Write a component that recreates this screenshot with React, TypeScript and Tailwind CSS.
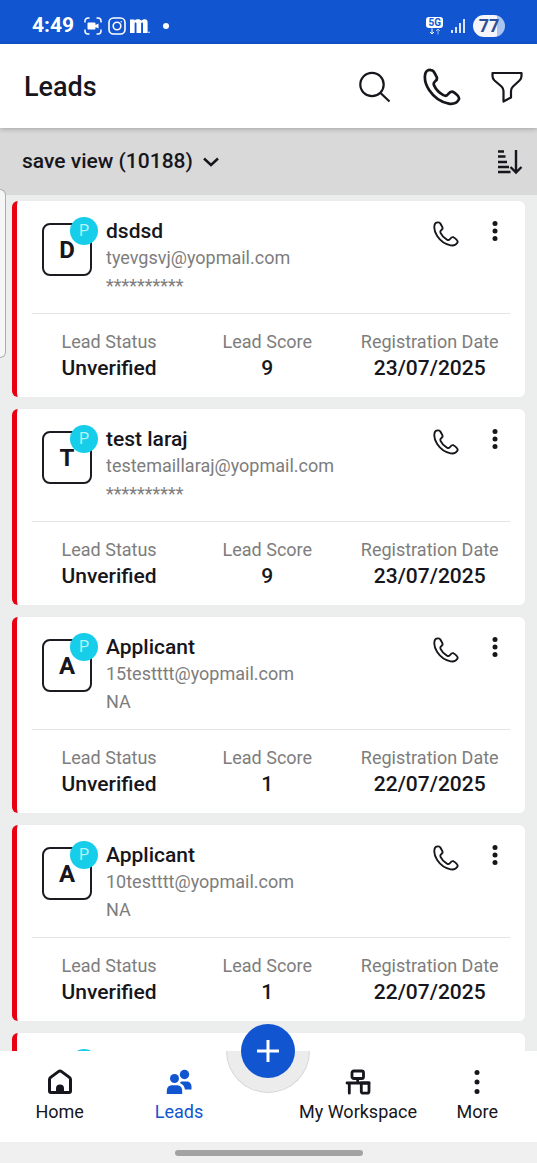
import React from 'react';

interface Lead {
  id: number;
  name: string;
  email: string;
  phone: string;
  status: string;
  score: number;
  registered: string;
}

interface IconProps {
  className?: string;
}

const leads: Lead[] = [
  { id: 1, name: 'dsdsd', email: 'tyevgsvj@yopmail.com', phone: '**********', status: 'Unverified', score: 9, registered: '23/07/2025' },
  { id: 2, name: 'test laraj', email: 'testemaillaraj@yopmail.com', phone: '**********', status: 'Unverified', score: 9, registered: '23/07/2025' },
  { id: 3, name: 'Applicant', email: '15testttt@yopmail.com', phone: 'NA', status: 'Unverified', score: 1, registered: '22/07/2025' },
  { id: 4, name: 'Applicant', email: '10testttt@yopmail.com', phone: 'NA', status: 'Unverified', score: 1, registered: '22/07/2025' },
  { id: 5, name: 'Applicant', email: '10testttt@yopmail.com', phone: 'NA', status: 'Unverified', score: 1, registered: '22/07/2025' },
];

const PhoneIcon: React.FC<IconProps> = ({ className }) => (
  <svg viewBox="-4 -4 112 112" className={className} fill="none" stroke="currentColor" strokeWidth="8" strokeLinejoin="round" aria-hidden="true">
    <path d="M19 2C12 1 5 5 3 12C-1 28 3 44 14 61C28 82 48 97 72 101C85 103 95 100 101 90C104 85 101 80 97 76C92 71 88 68 84 66C78 64 74 68 70 73C67 78 62 79 56 76C45 70 34 59 29 48C26 42 28 38 32 35C38 31 38 25 35 20C32 14 30 10 27 6C25 3 22 2 19 2Z" />
  </svg>
);

const SearchIcon: React.FC<IconProps> = ({ className }) => (
  <svg viewBox="0 0 32 32" className={className} fill="none" stroke="currentColor" strokeWidth="2.200" aria-hidden="true">
    <circle cx="13" cy="13.500" r="11.700" />
    <path d="M21.500 22L30.500 30.500" />
  </svg>
);

const FilterIcon: React.FC<IconProps> = ({ className }) => (
  <svg viewBox="0 0 32 32" className={className} fill="none" stroke="currentColor" strokeWidth="2.200" strokeLinejoin="round" aria-hidden="true">
    <path d="M1.500 2H30.500V5C30.500 7 29.800 8.300 28.500 9.500L22 15.500C20.600 16.800 20 18 20 20V26.500L12.500 30.500V20C12.500 18 11.800 16.800 10.500 15.500L3.500 9.500C2.200 8.300 1.500 7 1.500 5Z" />
  </svg>
);

const SortIcon: React.FC<IconProps> = ({ className }) => (
  <svg viewBox="0 0 26 26" className={className} fill="none" stroke="currentColor" strokeWidth="2.400" aria-hidden="true">
    <path d="M1 2.500H7M1 7.500H8.500M1 13H10M1 18H12M1 23H13.500" />
    <path d="M19 1V23.500M13.500 18L19 23.500L24.500 18" />
  </svg>
);

const KebabIcon: React.FC<IconProps> = ({ className }) => (
  <svg viewBox="0 0 6 20" className={className} fill="currentColor" aria-hidden="true">
    <circle cx="3" cy="2.500" r="2.500" />
    <circle cx="3" cy="10" r="2.500" />
    <circle cx="3" cy="17.500" r="2.500" />
  </svg>
);

const MoreIcon: React.FC<IconProps> = ({ className }) => (
  <svg viewBox="0 0 6 26" className={className} fill="currentColor" aria-hidden="true">
    <circle cx="3" cy="3.500" r="2.500" />
    <circle cx="3" cy="13" r="2.500" />
    <circle cx="3" cy="22.500" r="2.500" />
  </svg>
);

const HomeIcon: React.FC<IconProps> = ({ className }) => (
  <svg viewBox="0 0 26 26" className={className} fill="none" stroke="currentColor" strokeWidth="3" strokeLinejoin="round" aria-hidden="true">
    <path d="M2.500 10.500C2.500 9.500 2.900 9 3.600 8.400L11.400 2.600C12.500 1.800 13.500 1.800 14.600 2.600L22.400 8.400C23.100 9 23.500 9.500 23.500 10.500V22C23.500 23 23 23.500 22 23.500H4C3 23.500 2.500 23 2.500 22Z" />
    <path d="M9 24V19.500A4 4 0 0 1 17 19.500V24Z" fill="currentColor" stroke="none" />
  </svg>
);

const LeadsIcon: React.FC<IconProps> = ({ className }) => (
  <svg viewBox="0 0 26 26" className={className} fill="currentColor" aria-hidden="true">
    <circle cx="18.500" cy="5.500" r="4.700" />
    <path d="M15 12.500H20.500C23.600 12.500 25.500 14.600 25.500 17.500V20.500H19C18.500 17.500 17 15.300 14 14Z" />
    <circle cx="8.500" cy="9.500" r="5.200" fill="#fff" />
    <circle cx="8.500" cy="9.500" r="4.500" />
    <path d="M0.800 25V22C0.800 18.300 2.900 16.200 6.300 16.200H10.700C14.100 16.200 16.200 18.300 16.200 22V25Z" />
  </svg>
);

const WorkspaceIcon: React.FC<IconProps> = ({ className }) => (
  <svg viewBox="0 0 26 26" className={className} fill="none" stroke="currentColor" strokeWidth="2.800" strokeLinecap="round" strokeLinejoin="round" aria-hidden="true">
    <rect x="7" y="2" width="11.500" height="7.500" rx="1.800" />
    <path d="M12.700 9.500V14M2 14H24M4.300 14V24.200" />
    <path d="M16.300 14H24V22.200A2 2 0 0 1 22 24.200H18.300A2 2 0 0 1 16.300 22.200Z" />
  </svg>
);

const StatusBar = () => (
  <div className="flex h-11 shrink-0 items-center justify-between bg-[#1155d0] px-8 pt-2 text-white">
    <div className="flex items-center">
      <span className="text-[21px] font-bold">4:49</span>
      <svg viewBox="0 0 18 18" className="ml-[10px] size-[18px]" fill="none" stroke="currentColor" strokeWidth="1.500" aria-hidden="true">
        <path d="M1 5.500V4A3 3 0 0 1 4 1H5.500M12.500 1H14A3 3 0 0 1 17 4V5.500M17 12.500V14A3 3 0 0 1 14 17H12.500M5.500 17H4A3 3 0 0 1 1 14V12.500" />
        <path d="M4.500 5.500H10.500A1 1 0 0 1 11.500 6.500V8L14.500 6.500V11.500L11.500 10V11.500A1 1 0 0 1 10.500 12.500H4.500A1 1 0 0 1 3.500 11.500V6.500A1 1 0 0 1 4.500 5.500Z" fill="currentColor" stroke="none" />
      </svg>
      <svg viewBox="0 0 18 18" className="ml-[6px] size-[18px]" fill="none" stroke="currentColor" strokeWidth="1.600" aria-hidden="true">
        <rect x="1" y="1" width="16" height="16" rx="4.500" />
        <circle cx="9" cy="9" r="3.800" />
        <circle cx="13.300" cy="4.700" r="0.700" fill="currentColor" stroke="none" />
      </svg>
      <svg viewBox="0 0 20 16" className="ml-1 h-4 w-5" fill="currentColor" aria-hidden="true">
        <path d="M0 1.500H4.500V2.500C5.500 1.600 6.500 1.200 8 1.200C9.600 1.200 10.700 1.700 11.300 2.700C12.300 1.700 13.400 1.200 14.800 1.200C16.700 1.200 17.600 2.300 17.600 4.500V15H13V6C13 5 12.700 4.600 12.100 4.600C11.500 4.600 11.100 5.100 11.100 6V15H6.500V6C6.500 5 6.200 4.600 5.600 4.600C5 4.600 4.600 5.100 4.600 6V15H0Z" />
        <circle cx="19" cy="14.300" r="0.800" />
      </svg>
      <span className="ml-[13px] size-[6px] rounded-full bg-white" />
    </div>
    <div className="flex items-center gap-2">
      <div className="flex flex-col items-center">
        <span className="rounded-[3px] bg-white px-[2px] text-[10px] leading-[11px] font-bold text-[#1155d0]">5G</span>
        <svg viewBox="0 0 12 7" className="h-[7px] w-3" fill="none" stroke="currentColor" strokeWidth="1" aria-hidden="true">
          <path d="M3 0.500V6M1 4L3 6L5 4" />
          <path d="M9 6.500V1M7 3L9 1L11 3" opacity="0.6" />
        </svg>
      </div>
      <svg viewBox="0 0 14 16" className="h-4 w-[14px]" fill="#d9e5fa" aria-hidden="true">
        <rect x="0" y="12" width="2" height="3" />
        <rect x="4" y="9" width="2" height="6" />
        <rect x="8" y="5" width="2" height="10" />
        <rect x="12" y="1" width="2" height="14" />
      </svg>
      <span className="flex h-[22px] w-8 items-center justify-center rounded-full bg-linear-to-r from-[#f4f6fa] from-75% to-[#aac4ef] to-75% text-lg font-bold text-[#2f4f96]">
        77
      </span>
    </div>
  </div>
);

const Header = () => (
  <header className="z-10 flex h-[84px] shrink-0 items-center justify-between bg-white pt-[2px] pr-[14px] pl-6 shadow-[0_1px_5px_rgba(0,0,0,0.25)]">
    <h1 className="text-[27px] font-medium">Leads</h1>
    <div className="flex items-center">
      <button type="button" aria-label="Search">
        <SearchIcon className="size-8" />
      </button>
      <button type="button" aria-label="Call" className="ml-8">
        <PhoneIcon className="size-[38px]" />
      </button>
      <button type="button" aria-label="Filter" className="ml-[30px]">
        <FilterIcon className="size-8" />
      </button>
    </div>
  </header>
);

const ViewBar = () => (
  <div className="flex h-[67px] shrink-0 items-center justify-between bg-[#d9d9d9] pr-[14px] pl-[22px]">
    <button type="button" className="flex items-center gap-[10px] text-[21px] font-medium">
      save view (10188)
      <svg viewBox="0 0 16 10" className="h-[10px] w-4" fill="none" stroke="currentColor" strokeWidth="2.400" aria-hidden="true">
        <path d="M1 1.500L8 8L15 1.500" />
      </svg>
    </button>
    <button type="button" aria-label="Sort">
      <SortIcon className="size-[26px]" />
    </button>
  </div>
);

const Stat: React.FC<{ label: string; value: string | number }> = ({ label, value }) => (
  <div className="flex flex-col items-center whitespace-nowrap">
    <dt className="text-lg leading-[26px] text-[#7d7d7d]">{label}</dt>
    <dd className="text-[21px] leading-[26px] font-medium">{value}</dd>
  </div>
);

const LeadCard: React.FC<{ lead: Lead }> = ({ lead }) => (
  <article className="h-[196px] shrink-0 rounded-md border-l-5 border-[#e60012] bg-white">
    <div className="mx-[15px] flex h-[113px] items-start border-b border-[#e4e4e4] pt-4 pl-[10px]">
      <div className="relative mt-[6px] flex h-[53px] w-[50px] shrink-0 items-center justify-center rounded-lg border-2 border-[#1b1b22] text-2xl font-bold">
        {lead.name[0].toUpperCase()}
        <span className="absolute -top-2 -right-2 flex size-7 items-center justify-center rounded-full bg-[#16cdea] text-base font-normal text-[#b5f4fb]">
          P
        </span>
      </div>
      <div className="ml-[14px] min-w-0 flex-1">
        <h2 className="text-[21px] leading-7 font-medium">{lead.name}</h2>
        <p className="truncate text-lg leading-[26px] text-[#7d7d7d]">{lead.email}</p>
        <p className="text-lg leading-[30px] text-[#7d7d7d]">{lead.phone}</p>
      </div>
      <button type="button" aria-label={`Call ${lead.name}`} className="mt-1">
        <PhoneIcon className="size-[26px]" />
      </button>
      <button type="button" aria-label="Lead options" className="mt-1 mr-3 ml-[33px]">
        <KebabIcon className="h-5 w-[6px]" />
      </button>
    </div>
    <dl className="mr-3 ml-[13px] grid grid-cols-[19fr_19fr_20fr] pt-[15px]">
      <Stat label="Lead Status" value={lead.status} />
      <Stat label="Lead Score" value={lead.score} />
      <Stat label="Registration Date" value={lead.registered} />
    </dl>
  </article>
);

const NavItem: React.FC<{ label: string; icon: React.ReactNode; active?: boolean }> = ({ label, icon, active }) => (
  <a
    href="#"
    aria-current={active ? 'page' : undefined}
    className={`flex min-w-0 flex-col items-center gap-1 pt-[18px] text-lg leading-[26px] whitespace-nowrap ${active ? 'text-[#1155d0]' : 'text-[#16161c]'}`}
  >
    {icon}
    {label}
  </a>
);

const BottomNav = () => (
  <nav className="relative grid h-[91px] shrink-0 grid-cols-[2fr_2fr_1fr_2fr_2fr] bg-white">
    <NavItem label="Home" icon={<HomeIcon className="size-[26px]" />} />
    <NavItem label="Leads" active icon={<LeadsIcon className="size-[26px]" />} />
    <div className="relative">
      <span className="absolute top-0 left-1/2 h-[42px] w-[84px] -translate-x-1/2 rounded-b-full border border-t-0 border-[#d6d6d6] bg-[#ececec]" />
      <button
        type="button"
        aria-label="Add lead"
        className="absolute -top-[27px] left-1/2 flex size-[54px] -translate-x-1/2 items-center justify-center rounded-full bg-[#1155d0] text-white"
      >
        <svg viewBox="0 0 22 22" className="size-[22px]" stroke="currentColor" strokeWidth="3" aria-hidden="true">
          <path d="M11 0V22M0 11H22" />
        </svg>
      </button>
    </div>
    <NavItem label="My Workspace" icon={<WorkspaceIcon className="size-[26px]" />} />
    <NavItem label="More" icon={<MoreIcon className="h-[26px] w-[6px]" />} />
  </nav>
);

const App: React.FC = () => {
  return (
    <div className="relative flex h-screen flex-col overflow-hidden bg-[#eceeed] font-[Roboto,sans-serif] text-[#16161c]">
      <StatusBar />
      <Header />
      <ViewBar />
      {/* edge panel handle */}
      <div className="absolute top-[189px] left-0 h-[169px] w-[6px] rounded-r-md border border-l-0 border-[#adadad] bg-[#f6f6f6]" />
      <main className="flex min-h-0 flex-1 flex-col gap-3 overflow-y-auto px-3 pt-[6px] [scrollbar-width:none]">
        {leads.map((lead) => (
          <LeadCard key={lead.id} lead={lead} />
        ))}
      </main>
      <BottomNav />
      <div className="flex h-[21px] shrink-0 items-center justify-center bg-[#f0f0f0]">
        <span className="h-[6px] w-[188px] rounded-full bg-[#a3a3a3]" />
      </div>
    </div>
  );
};

export default App;
